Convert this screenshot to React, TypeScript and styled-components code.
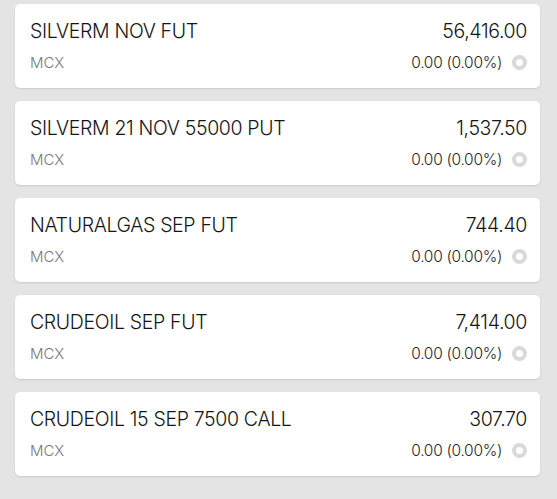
import styled, { createGlobalStyle } from 'styled-components';

const GlobalStyle = createGlobalStyle`
  html, body {
    margin: 0;
    padding: 0;
    background: #e4e4e4;
  }
  body {
    font-family: Inter, "Noto Sans", sans-serif;
  }
`;

interface Instrument {
  name: string;
  exchange: string;
  price: string;
  change: string;
}

const instruments: Instrument[] = [
  { name: 'SILVERM NOV FUT', exchange: 'MCX', price: '56,416.00', change: '0.00 (0.00%)' },
  { name: 'SILVERM 21 NOV 55000 PUT', exchange: 'MCX', price: '1,537.50', change: '0.00 (0.00%)' },
  { name: 'NATURALGAS SEP FUT', exchange: 'MCX', price: '744.40', change: '0.00 (0.00%)' },
  { name: 'CRUDEOIL SEP FUT', exchange: 'MCX', price: '7,414.00', change: '0.00 (0.00%)' },
  { name: 'CRUDEOIL 15 SEP 7500 CALL', exchange: 'MCX', price: '307.70', change: '0.00 (0.00%)' },
];

const List = styled.div`
  display: flex;
  flex-direction: column;
  gap: 13px;
  padding: 4px 17px 20px 15px;
  min-height: 499px;
  box-sizing: border-box;
`;

const Card = styled.div`
  background: #ffffff;
  border-radius: 5px;
  box-shadow: 0 1px 2px rgba(0, 0, 0, 0.12);
  height: 84px;
  box-sizing: border-box;
  padding: 15px 13px 0 15px;
  display: grid;
  grid-template-columns: 1fr auto;
  grid-template-rows: 24px 24px;
  row-gap: 7px;
  align-items: center;
`;

const Name = styled.div`
  font-size: 19.5px;
  font-weight: 350;
  color: #151515;
  letter-spacing: -0.35px;
`;

const Price = styled.div`
  font-size: 19.5px;
  font-weight: 350;
  color: #151515;
  text-align: right;
  letter-spacing: -0.35px;
`;

const Exchange = styled.div`
  font-size: 15px;
  font-weight: 300;
  color: #7a7a7a;
`;

const ChangeRow = styled.div`
  display: flex;
  align-items: center;
  justify-content: flex-end;
  gap: 10px;
  font-size: 15.5px;
  font-weight: 350;
  color: #1f1f1f;
  letter-spacing: -0.3px;
`;

const Dot = styled.span`
  width: 7px;
  height: 7px;
  border-radius: 50%;
  border: 4px solid #d9d9d9;
  background: #ffffff;
  flex: none;
`;

export default function App() {
  return (
    <>
      <GlobalStyle />
      <List>
        {instruments.map((item) => (
          <Card key={item.name}>
            <Name>{item.name}</Name>
            <Price>{item.price}</Price>
            <Exchange>{item.exchange}</Exchange>
            <ChangeRow>
              {item.change}
              <Dot />
            </ChangeRow>
          </Card>
        ))}
      </List>
    </>
  );
}
